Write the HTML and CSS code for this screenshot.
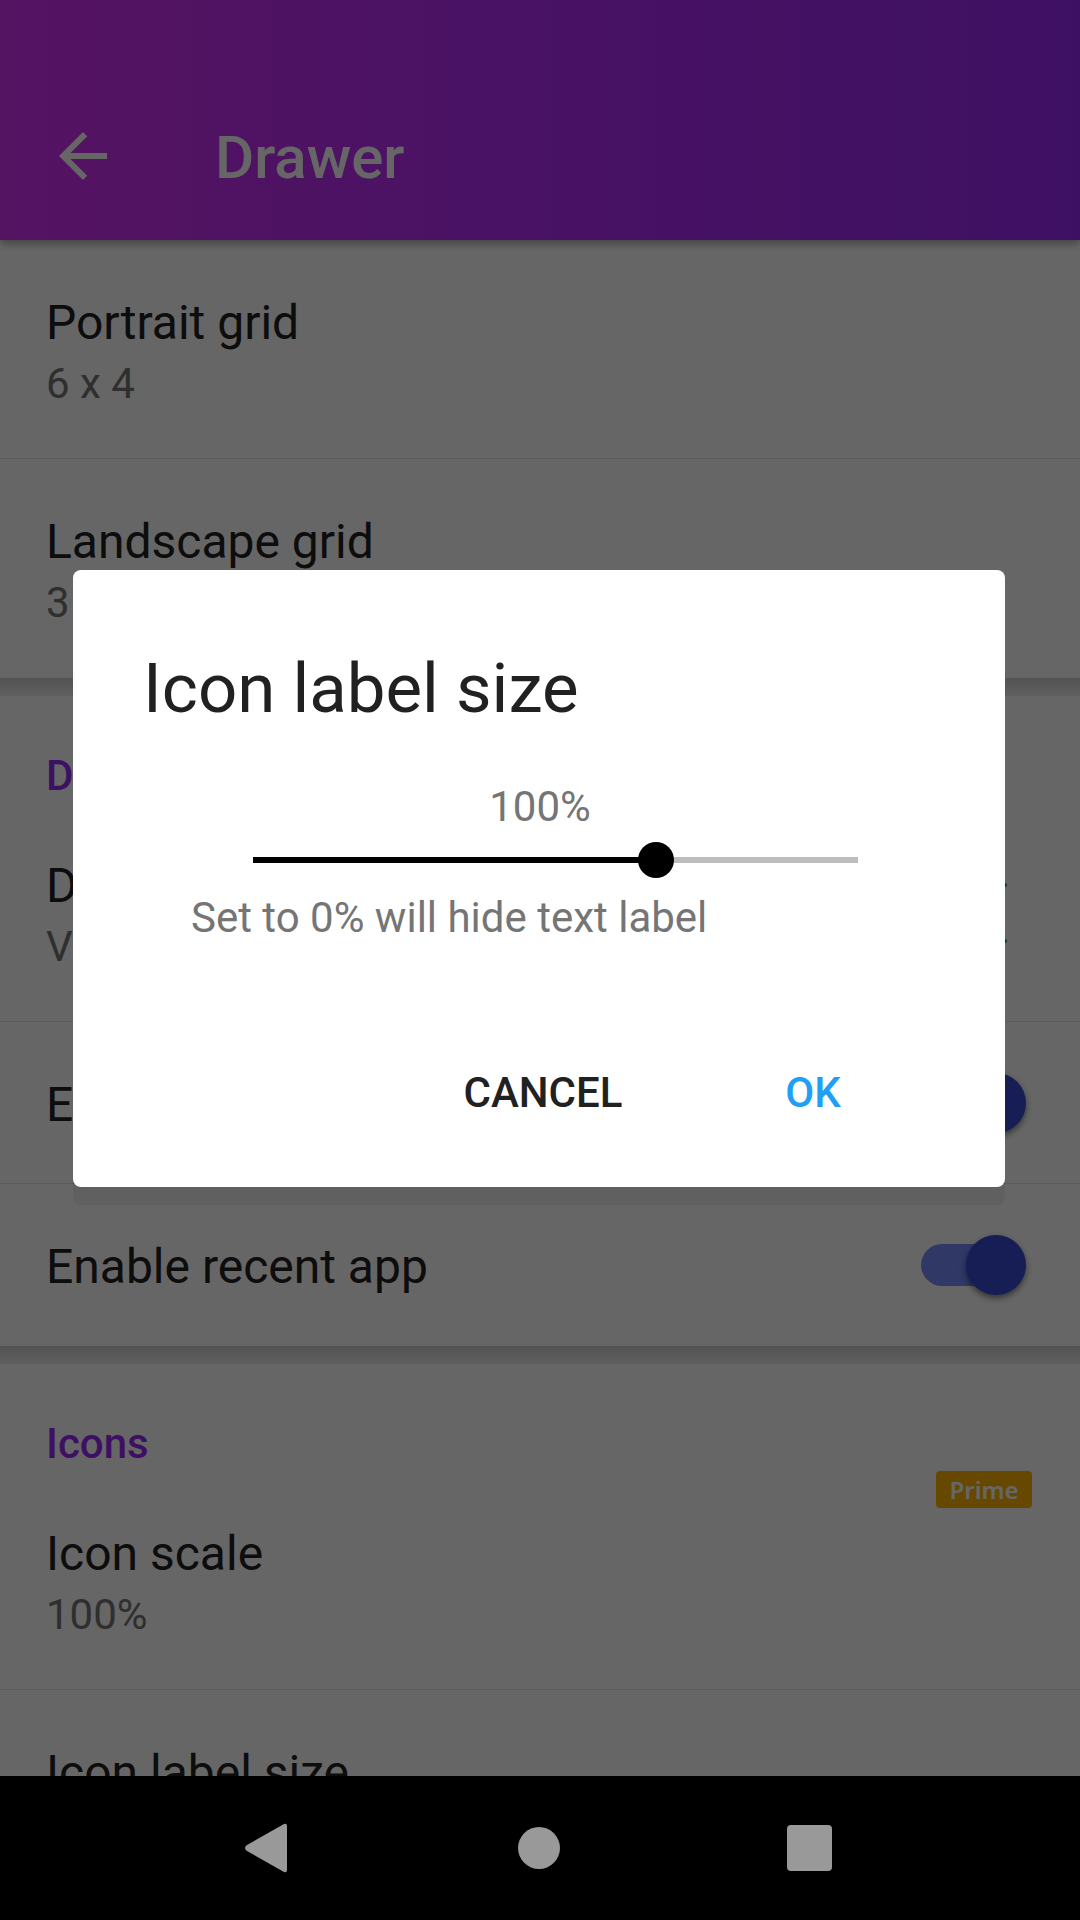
FILE: index.html
```html
<!DOCTYPE html>
<html lang="en">
<head>
<meta charset="utf-8">
<meta name="viewport" content="width=device-width, initial-scale=1">
<title>Drawer</title>
<link rel="stylesheet" href="styles.css">
</head>
<body>
<div class="screen">
  <header class="toolbar">
    <button class="back" type="button" aria-label="Back">
      <svg class="back-icon" viewBox="0 0 24 24" aria-hidden="true"><path d="M20 11H7.830l5.590-5.590L12 4l-8 8 8 8 1.410-1.410L7.830 13H20z"/></svg>
    </button>
    <h1 class="toolbar-title">Drawer</h1>
  </header>

  <main class="settings">
    <section class="group">
      <div class="row">
        <div class="row-title">Portrait grid</div>
        <div class="row-summary">6 x 4</div>
      </div>
      <div class="row">
        <div class="row-title">Landscape grid</div>
        <div class="row-summary">3</div>
      </div>
    </section>

    <section class="group">
      <h2 class="group-title">D</h2>
      <div class="row row-with-icon">
        <div>
          <div class="row-title">D</div>
          <div class="row-summary">V</div>
        </div>
        <svg class="style-icon" viewBox="0 0 72 72" aria-hidden="true"><path d="M6 8h37M6 64h37"/></svg>
      </div>
      <div class="row row-switch">
        <label class="row-title" for="fast">E</label>
        <input class="switch" id="fast" type="checkbox" checked>
      </div>
      <div class="row row-switch">
        <label class="row-title" for="recent">Enable recent app</label>
        <input class="switch" id="recent" type="checkbox" checked>
      </div>
    </section>

    <section class="group">
      <h2 class="group-title">Icons</h2>
      <div class="row">
        <span class="badge">Prime</span>
        <div class="row-title">Icon scale</div>
        <div class="row-summary">100%</div>
      </div>
      <div class="row">
        <div class="row-title">Icon label size</div>
      </div>
    </section>
  </main>

  <div class="scrim">
    <div class="dialog" role="dialog" aria-labelledby="dialog-title">
      <h2 class="dialog-title" id="dialog-title">Icon label size</h2>
      <label class="slider-value" for="size">100%</label>
      <input class="slider" id="size" type="range" min="0" max="150" value="100">
      <p class="hint">Set to 0% will hide text label</p>
      <div class="actions">
        <button class="action" type="button">CANCEL</button>
        <button class="action action-primary" type="button">OK</button>
      </div>
    </div>
  </div>

  <nav class="navbar">
    <button class="nav-button" type="button" aria-label="Back">
      <svg class="nav-icon" viewBox="0 0 54 54"><path d="M44 5v44q0 3-3 2L4 30q-4-3 0-6L41 3q3-1 3 2z"/></svg>
    </button>
    <button class="nav-button" type="button" aria-label="Home">
      <svg class="nav-icon" viewBox="0 0 54 54"><circle cx="26" cy="27" r="21"/></svg>
    </button>
    <button class="nav-button" type="button" aria-label="Recent apps">
      <svg class="nav-icon" viewBox="0 0 54 54"><rect x="4" y="4" width="45" height="46" rx="4"/></svg>
    </button>
  </nav>
</div>
</body>
</html>
```

FILE: styles.css
```css
* {
  box-sizing: border-box;
}

body {
  margin: 0;
  background: #fff;
  color: #212121;
  font-family: Roboto, "Liberation Sans", sans-serif;
}

button {
  padding: 0;
  border: 0;
  background: none;
  font: inherit;
}

h1, h2, p {
  margin: 0;
  font-weight: 500;
}

.screen {
  position: relative;
  display: flex;
  flex-direction: column;
  height: 100vh;
}

/* App bar, with room for the status bar above it */
.toolbar {
  position: relative;
  z-index: 1;
  flex: none;
  display: flex;
  align-items: center;
  gap: 96px;
  min-height: 240px;
  padding: 72px 47px 0;
  background: linear-gradient(90deg, #d432f5, #b62dfa 50%, #9c2af7);
  box-shadow: 0 3px 9px rgba(0, 0, 0, 0.4);
  color: #fff;
}

.back,
.back-icon {
  display: block;
  width: 72px;
  height: 72px;
}

.back-icon {
  fill: #fff;
}

.toolbar-title {
  padding-top: 4px;
  font-size: 60px;
  line-height: 70px;
}

/* Preference list */
.settings {
  flex: 1;
  min-height: 0;
  overflow: hidden;
}

.group + .group {
  border-top: 18px solid transparent;
  background: linear-gradient(#cfcfcf, #efefef) 0 0 / 100% 18px no-repeat border-box;
}

.group-title {
  height: 107px;
  padding: 55px 46px 0;
  color: #9c2af7;
  font-size: 42px;
  line-height: 50px;
}

.row {
  position: relative;
  height: 219px;
  padding: 55px 46px 54px;
  border-bottom: 1px solid #e4e4e4;
}

.row:last-child {
  border-bottom-color: transparent;
}

.row-title {
  font-size: 48px;
  line-height: 56px;
}

.row-summary {
  padding-top: 8px;
  color: #757575;
  font-size: 42px;
  line-height: 50px;
}

.row-with-icon,
.row-switch {
  display: flex;
  justify-content: space-between;
}

.row-switch {
  align-items: center;
  height: 162px;
  padding: 0 54px 0 46px;
}

.row-switch .row-title {
  padding-top: 4px;
}

.style-icon {
  align-self: center;
  width: 72px;
  height: 72px;
  fill: none;
  stroke: #0a8fc4;
  stroke-width: 4;
  stroke-linecap: round;
}

.switch {
  appearance: none;
  display: grid;
  align-items: center;
  width: 105px;
  height: 60px;
  margin: 0;
}

.switch::before,
.switch::after {
  content: "";
  grid-area: 1 / 1;
}

.switch::before {
  width: 96px;
  height: 42px;
  border-radius: 21px;
  background: #788cff;
}

.switch::after {
  justify-self: end;
  width: 60px;
  height: 60px;
  border-radius: 50%;
  background: #374bd5;
  box-shadow: 0 3px 6px rgba(0, 0, 0, 0.5);
}

.badge {
  position: absolute;
  top: 0;
  right: 48px;
  width: 96px;
  border-radius: 4px;
  background: #ffb400;
  color: #fff;
  font-family: "Noto Sans", sans-serif;
  font-size: 24px;
  font-weight: 600;
  line-height: 37px;
  text-align: center;
}

/* Modal dialog */
.scrim {
  position: absolute;
  inset: 0;
  z-index: 2;
  display: flex;
  align-items: center;
  padding: 0 75px 164px 73px;
  background: rgba(0, 0, 0, 0.6);
}

.dialog {
  flex: 1;
  display: flex;
  flex-direction: column;
  padding: 79px 68px 46px 70px;
  border-radius: 8px;
  background: #fff;
  box-shadow: 0 18px 0 rgba(0, 0, 0, 0.06);
}

.dialog-title {
  font-size: 69px;
  font-weight: 400;
  line-height: 80px;
}

.slider-value {
  margin-top: 53px;
  color: #757575;
  font-size: 42px;
  line-height: 50px;
  text-align: center;
}

.slider {
  --fill: 0.6667;
  appearance: none;
  height: 36px;
  margin: 10px 61px 0 92px;
  background:
    linear-gradient(#000, #000) 18px 50% / calc((100% - 36px) * var(--fill)) 6px no-repeat,
    linear-gradient(#bdbdbd, #bdbdbd) 50% 50% / calc(100% - 36px) 6px no-repeat;
}

.slider::-webkit-slider-thumb {
  appearance: none;
  width: 36px;
  height: 36px;
  border-radius: 50%;
  background: #000;
}

.hint {
  margin-top: 15px;
  padding-left: 48px;
  color: #757575;
  font-size: 42px;
  font-weight: 400;
  line-height: 50px;
}

.actions {
  display: flex;
  justify-content: flex-end;
  gap: 78px;
  margin-top: 102px;
  padding-right: 28px;
}

.action {
  min-width: 192px;
  height: 96px;
  font-size: 42px;
  font-weight: 500;
  color: #212121;
}

.action-primary {
  color: #219ff5;
}

/* System navigation */
.navbar {
  position: relative;
  z-index: 3;
  flex: none;
  display: flex;
  justify-content: space-between;
  padding: 0 190px;
  height: 144px;
  background: #000;
}

.nav-button {
  display: flex;
  align-items: center;
  justify-content: center;
  width: 160px;
}

.nav-icon {
  width: 54px;
  height: 54px;
  fill: #999;
}
```
